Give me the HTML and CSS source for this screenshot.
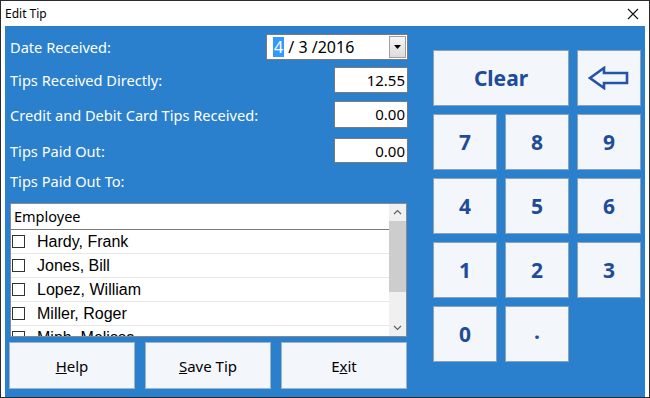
FILE: index.html
```html
<!DOCTYPE html>
<html lang="en">
<head>
    <meta charset="UTF-8">
    <title>Edit Tip</title>
    <link rel="stylesheet" href="styles.css">
</head>
<body>
    <div class="window">
        <div class="titlebar">
            <span class="title">Edit Tip</span>
            <svg class="close" width="12" height="12" viewBox="0 0 12 12">
                <path d="M1 1 L11 11 M11 1 L1 11" stroke="#111" stroke-width="1.1" fill="none"/>
            </svg>
        </div>
        <div class="client">
            <div class="left">
                <div class="row r1">
                    <span class="label">Date Received:</span>
                    <div class="combo">
                        <span class="sel">4</span><span class="date"> / 3 /2016</span>
                        <span class="drop">
                            <svg width="7" height="4" viewBox="0 0 7 4"><path d="M0 0 L7 0 L3.5 4 Z" fill="#000"/></svg>
                        </span>
                    </div>
                </div>
                <div class="row r2">
                    <span class="label">Tips Received Directly:</span>
                    <div class="field">12.55</div>
                </div>
                <div class="row r3">
                    <span class="label">Credit and Debit Card Tips Received:</span>
                    <div class="field tall">0.00</div>
                </div>
                <div class="row r4">
                    <span class="label">Tips Paid Out:</span>
                    <div class="field short">0.00</div>
                </div>
                <div class="row r5">
                    <span class="label">Tips Paid Out To:</span>
                </div>

                <div class="listbox">
                    <div class="list">
                        <div class="list-head">Employee</div>
                        <div class="item"><span class="check"></span>Hardy, Frank</div>
                        <div class="item"><span class="check"></span>Jones, Bill</div>
                        <div class="item"><span class="check"></span>Lopez, William</div>
                        <div class="item"><span class="check"></span>Miller, Roger</div>
                        <div class="item"><span class="check"></span>Minh, Melissa</div>
                    </div>
                    <div class="scrollbar">
                        <svg class="arrow" width="17" height="17" viewBox="0 0 17 17"><path d="M5 10 L8.5 6.5 L12 10" stroke="#606060" stroke-width="1.2" fill="none"/></svg>
                        <div class="track"><div class="thumb"></div></div>
                        <svg class="arrow" width="17" height="17" viewBox="0 0 17 17"><path d="M5 7 L8.5 10.5 L12 7" stroke="#606060" stroke-width="1.2" fill="none"/></svg>
                    </div>
                </div>

                <div class="actions">
                    <button class="action"><u>H</u>elp</button>
                    <button class="action"><u>S</u>ave Tip</button>
                    <button class="action">E<u>x</u>it</button>
                </div>
            </div>

            <div class="keypad">
                <button class="key wide">Clear</button>
                <button class="key">
                    <svg width="42" height="24" viewBox="0 0 42 24">
                        <path d="M2 12 L16 2 L16 7 L39 7 L39 17 L16 17 L16 22 Z" fill="none" stroke="#2453a8" stroke-width="2.6" stroke-linejoin="miter"/>
                    </svg>
                </button>
                <button class="key">7</button>
                <button class="key">8</button>
                <button class="key">9</button>
                <button class="key">4</button>
                <button class="key">5</button>
                <button class="key">6</button>
                <button class="key">1</button>
                <button class="key">2</button>
                <button class="key">3</button>
                <button class="key">0</button>
                <button class="key dot">.</button>
            </div>
        </div>
    </div>
</body>
</html>
```

FILE: styles.css
```css
* { box-sizing: border-box; }
body {
    margin: 0;
    font-family: 'Noto Sans', 'Open Sans', sans-serif;
    background: #ffffff;
}
.window {
    width: 650px;
    height: 398px;
    border: 1px solid #2b2b2b;
    display: flex;
    flex-direction: column;
    background: #ffffff;
}
.titlebar {
    height: 25px;
    display: flex;
    align-items: center;
    justify-content: space-between;
    padding: 0 10px 0 4px;
}
.title {
    font-size: 12px;
    color: #000;
}
.close { margin-top: 1px; }
.client {
    flex: 1;
    margin: 0 4px;
    background: #2a80cc;
    display: flex;
}
.left {
    width: 403px;
    padding: 4px 0 0 4px;
}
.row {
    display: flex;
    align-items: center;
    justify-content: space-between;
}
.r1 { height: 33px; }
.r2 { height: 33px; }
.r3 { height: 37px; }
.r4 { height: 35px; }
.r5 { height: 28px; padding-bottom: 2px; }
.label {
    color: #ffffff;
    font-size: 14.6px;
    padding-left: 1px;
}
.combo {
    width: 142px;
    height: 26px;
    background: #fff;
    border: 1px solid #7a7a7a;
    display: flex;
    align-items: center;
    padding-left: 6px;
    font-size: 16px;
    color: #000;
    position: relative;
}
.sel {
    background: #3399ff;
    color: #fff;
    padding: 0 1px;
    line-height: 20px;
}
.date { white-space: pre; }
.drop {
    position: absolute;
    right: 1px;
    top: 1px;
    width: 17px;
    height: 22px;
    background: linear-gradient(#f6f6f6, #dcdcdc);
    border: 1px solid #a0a0a0;
    display: flex;
    align-items: center;
    justify-content: center;
}
.field {
    width: 74px;
    height: 26px;
    background: #fff;
    border: 1px solid #7a7a7a;
    text-align: right;
    padding: 2px 2px 0 0;
    font-size: 15px;
    color: #000;
}
.field.tall { height: 27px; }
.field.short { height: 25px; }
.listbox {
    margin: 7px 0 0 1px;
    width: 397px;
    height: 134px;
    border: 1px solid #8a8a8a;
    background: #fff;
    display: flex;
}
.list {
    flex: 1;
    overflow: hidden;
}
.list-head {
    height: 26px;
    border-bottom: 1px solid #7d7d7d;
    font-size: 14.5px;
    padding: 2px 0 0 3px;
    color: #000;
}
.item {
    height: 24px;
    border-bottom: 1px solid #e8e8e8;
    display: flex;
    align-items: center;
    font-family: 'Liberation Sans', Arial, sans-serif;
    font-size: 16px;
    color: #000;
}
.check {
    width: 13px;
    height: 13px;
    border: 1px solid #333;
    margin: 0 12px 0 1px;
}
.scrollbar {
    width: 17px;
    background: #f0f0f0;
    display: flex;
    flex-direction: column;
}
.track {
    flex: 1;
}
.thumb {
    height: 71px;
    background: #cdcdcd;
}
.actions {
    display: flex;
    gap: 10px;
    margin-top: 5px;
}
.action {
    width: 126px;
    height: 47px;
    background: #f3f6fb;
    border: 1px solid #9fb2c8;
    font-family: 'Noto Sans', 'Open Sans', sans-serif;
    font-size: 15px;
    color: #000;
    padding: 0;
}
.keypad {
    margin: 24px 0 0 25px;
    display: grid;
    grid-template-columns: repeat(3, 64px);
    grid-auto-rows: 56px;
    gap: 8px;
    align-content: start;
}
.key {
    background: #f3f6fb;
    border: 1px solid #8ca2bb;
    font-family: 'Noto Sans', 'Open Sans', sans-serif;
    font-weight: bold;
    font-size: 21px;
    color: #1f4c98;
    padding: 0;
    display: flex;
    align-items: center;
    justify-content: center;
}
.key.wide { grid-column: span 2; }
.key.dot { padding-bottom: 6px; }
```
